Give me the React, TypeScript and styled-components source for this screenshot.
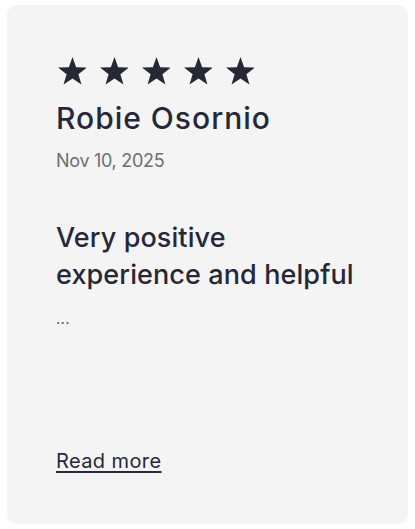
import React from 'react';
import styled, { createGlobalStyle } from 'styled-components';

const GlobalStyle = createGlobalStyle`
  html, body {
    margin: 0;
    padding: 0;
    background: #ffffff;
  }
  body {
    font-family: Inter, "Noto Sans", sans-serif;
  }
`;

const Page = styled.div`
  box-sizing: border-box;
  width: 415px;
  height: 529px;
  padding: 5px 7px;
`;

const Card = styled.article`
  box-sizing: border-box;
  height: 100%;
  display: flex;
  flex-direction: column;
  padding: 52px 49px 50px;
  background: #f4f4f4;
  border-radius: 10px;
  color: #262838;
`;

const Stars = styled.div`
  display: flex;
  gap: 12px;
  height: 28px;
`;

const Star = styled.svg`
  display: block;
  width: 30px;
  height: 28px;
  fill: #262838;
`;

const Name = styled.h2`
  margin: 15px 0 0;
  font-size: 30px;
  font-weight: 500;
  line-height: 36px;
  letter-spacing: 1px;
`;

const DateText = styled.div`
  margin-top: 13px;
  font-size: 18px;
  line-height: 24px;
  color: #6e6e72;
  letter-spacing: -0.3px;
`;

const Title = styled.h3`
  margin: 46px 0 0;
  font-size: 27px;
  font-weight: 500;
  line-height: 37px;
  letter-spacing: 0.1px;
`;

const Ellipsis = styled.div`
  margin-top: 16px;
  font-size: 15px;
  line-height: 20px;
  color: #5e5e64;
  letter-spacing: 0.3px;
`;

const ReadMore = styled.a`
  margin-top: auto;
  align-self: flex-start;
  font-size: 20px;
  line-height: 26px;
  color: #262838;
  text-decoration: underline;
  text-decoration-thickness: 2px;
  text-underline-offset: 3px;
  letter-spacing: 0.4px;
  cursor: pointer;
`;

const StarIcon = () => (
  <Star viewBox="-1.5 0 30 28">
    <polygon points="15,0 18.64,10.23 29.5,10.54 20.9,17.17 23.96,27.59 15,21.45 6.04,27.59 9.1,17.17 0.5,10.54 11.36,10.23" />
  </Star>
);

const App = () => {
  return (
    <>
      <GlobalStyle />
      <Page>
        <Card>
          <Stars>
            {[0, 1, 2, 3, 4].map((i) => (
              <StarIcon key={i} />
            ))}
          </Stars>
          <Name>Robie Osornio</Name>
          <DateText>Nov 10, 2025</DateText>
          <Title>
            Very positive
            <br />
            experience and helpful
          </Title>
          <Ellipsis>...</Ellipsis>
          <ReadMore>Read more</ReadMore>
        </Card>
      </Page>
    </>
  );
};

export default App;
